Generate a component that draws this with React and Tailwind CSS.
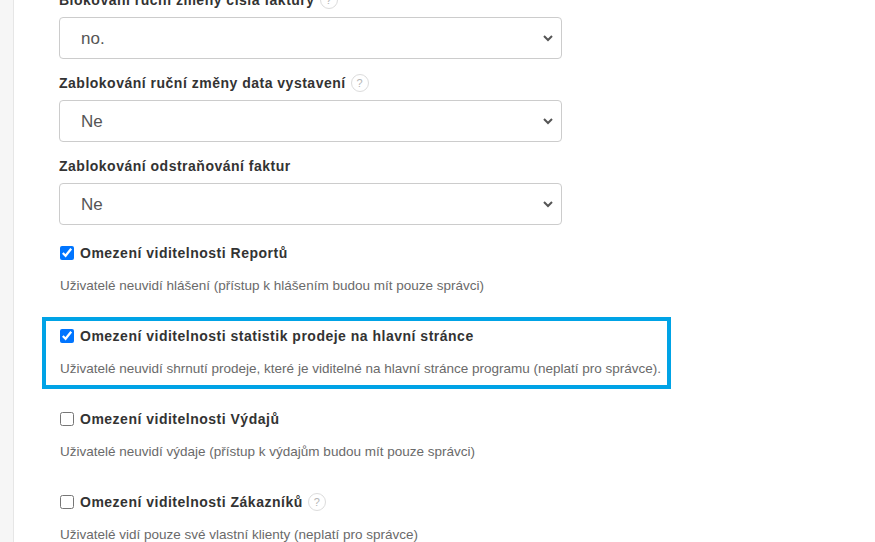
import React from 'react'

const labelFont = { fontFamily: '"Liberation Sans", Arial, sans-serif' }

function Help() {
  return (
    <span className="ml-[5px] inline-flex h-[18px] w-[18px] items-center justify-center rounded-full border border-[#dcdcdc] text-[11px] font-normal leading-none text-[#b5b5b5] tracking-normal">
      ?
    </span>
  )
}

function SelectField({ label, help, value }) {
  return (
    <div className="mb-[14px]">
      <div className="mb-[7px] flex h-5 items-center text-[14px] font-bold tracking-[0.5px] text-[#333]">
        {label}
        {help && <Help />}
      </div>
      <div className="relative w-[503px]">
        <select
          defaultValue={value}
          className="h-[42px] w-full appearance-none rounded-[4px] border border-[#cccccc] bg-white pl-[21px] pt-[2px] text-[17px] text-[#555] outline-none"
        >
          <option>{value}</option>
        </select>
        <svg className="pointer-events-none absolute right-[8px] top-[16px]" width="12" height="10" viewBox="0 0 12 10">
          <path d="M2 3l4 4 4-4" fill="none" stroke="#555" strokeWidth="2" />
        </svg>
      </div>
    </div>
  )
}

function CheckItem({ label, desc, checked, help, highlight }) {
  return (
    <div
      className={
        'mb-[11px] ml-[-17px] w-[629px] border-4 pb-[6px] pl-[14px] pt-[5px] ' +
        (highlight ? 'border-[#00a3e6]' : 'border-transparent')
      }
    >
      <label className="flex h-5 items-center text-[14px] font-bold tracking-[0.5px] text-[#333]">
        <input type="checkbox" defaultChecked={checked} className="m-0 mr-[6px] h-[14px] w-[14px] accent-[#0075ff]" />
        {label}
        {help && <Help />}
      </label>
      <p className="mt-[13px] h-5 whitespace-nowrap text-[13.5px] leading-5 text-[#6a6a6a]">{desc}</p>
    </div>
  )
}

export default function App() {
  return (
    <div className="flex h-[542px] overflow-hidden bg-white" style={labelFont}>
      <div className="w-[14px] shrink-0 border-r border-[#e6e6e6] bg-[#f6f6f6]" />
      <div className="flex-1 pl-[45px]">
        <div className="-mt-[10px]">
          <SelectField label="Blokování ruční změny čísla faktury" help value="no." />
          <SelectField label="Zablokování ruční změny data vystavení" help value="Ne" />
          <SelectField label="Zablokování odstraňování faktur" value="Ne" />
        </div>
        <div className="-mt-[5px]">
          <CheckItem
            checked
            label="Omezení viditelnosti Reportů"
            desc="Uživatelé neuvidí hlášení (přístup k hlášením budou mít pouze správci)"
          />
          <CheckItem
            checked
            highlight
            label="Omezení viditelnosti statistik prodeje na hlavní stránce"
            desc="Uživatelé neuvidí shrnutí prodeje, které je viditelné na hlavní stránce programu (neplatí pro správce)."
          />
          <CheckItem
            label="Omezení viditelnosti Výdajů"
            desc="Uživatelé neuvidí výdaje (přístup k výdajům budou mít pouze správci)"
          />
          <CheckItem
            help
            label="Omezení viditelnosti Zákazníků"
            desc="Uživatelé vidí pouze své vlastní klienty (neplatí pro správce)"
          />
        </div>
      </div>
    </div>
  )
}
